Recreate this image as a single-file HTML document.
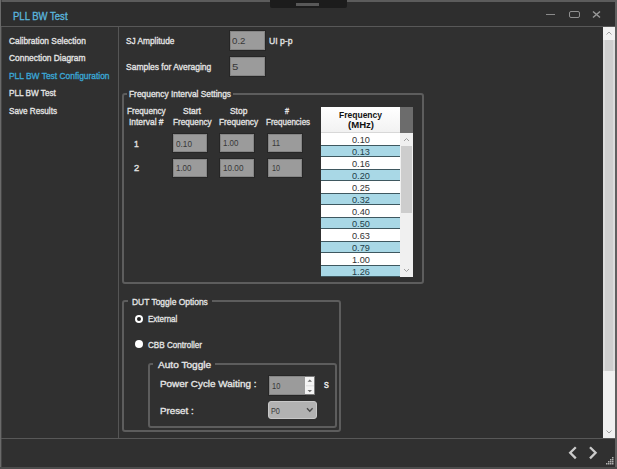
<!DOCTYPE html>
<html><head><meta charset="utf-8">
<style>
*{margin:0;padding:0;box-sizing:border-box}
html,body{width:617px;height:469px;overflow:hidden;background:#303030}
body{position:relative;font-family:"Liberation Sans",sans-serif}
.a{position:absolute}
.tx{position:absolute;white-space:nowrap;transform-origin:0 0}
.inp{position:absolute;background:#9b9b9b;border:1px solid #858585;box-shadow:0 0 0 1px #262626}
.gb{position:absolute;border:2px solid #5d5d5d;border-radius:3px}
.gap{position:absolute;background:#303030;height:3px}
.row{position:absolute;left:321px;width:79px;height:12px;background:#ffffff}
.row.b{background:#a9d8e6;border-top:1px solid #3f5860;border-bottom:1px solid #3f5860}
</style></head><body>
<!-- window borders -->
<div class="a" style="left:0;top:0;width:617px;height:2px;background:#5c5c5c"></div>
<div class="a" style="left:0;top:0;width:1px;height:469px;background:#6a6a6a"></div><div class="a" style="left:1px;top:0;width:1px;height:469px;background:#454545"></div>
<div class="a" style="left:615px;top:0;width:2px;height:469px;background:#606060"></div>
<div class="a" style="left:0;top:467px;width:617px;height:2px;background:#4c4c4c"></div>
<!-- title bar -->
<div class="a" style="left:1px;top:2px;width:614px;height:24px;background:#2e2e2e"></div>
<div class="a" style="left:270px;top:0;width:77px;height:8px;background:#1c1c1c;border-radius:0 0 2px 2px"></div>
<div class="a" style="left:296px;top:3px;width:23px;height:3px;background:#585858"></div>
<!-- window controls -->
<div class="a" style="left:546px;top:14px;width:9px;height:1px;background:#8a8a8a"></div>
<div class="a" style="left:568.5px;top:10.5px;width:11px;height:7px;border:1.7px solid #909090;border-radius:2px"></div>
<svg class="a" style="left:591px;top:10px" width="11" height="9" viewBox="0 0 11 9"><path d="M2 1.5 L9 7.5 M9 1.5 L2 7.5" stroke="#989898" stroke-width="1.5"/></svg>
<!-- separators -->
<div class="a" style="left:1px;top:26px;width:614px;height:1px;background:#585858"></div>
<div class="a" style="left:118px;top:27px;width:1px;height:411px;background:#555555"></div>
<div class="a" style="left:1px;top:438px;width:614px;height:1px;background:#585858"></div>
<!-- main scrollbar -->
<div class="a" style="left:603px;top:27px;width:12px;height:411px;background:#f0f0f0"></div>
<div class="a" style="left:603px;top:40px;width:12px;height:331px;background:#dcdcdc"></div><div class="a" style="left:605px;top:40px;width:8px;height:331px;background:#cfcfcf"></div>
<svg class="a" style="left:603px;top:27px" width="12" height="12"><path d="M3.5 7.5 L6 5 L8.5 7.5" stroke="#a0a0a0" stroke-width="1" fill="none"/></svg>
<svg class="a" style="left:603px;top:426px" width="12" height="12"><path d="M3.5 4.5 L6 7 L8.5 4.5" stroke="#a0a0a0" stroke-width="1" fill="none"/></svg>
<!-- bottom chevrons -->
<svg class="a" style="left:566px;top:444px" width="34" height="17"><path d="M9.8 3.2 L4.2 8.8 L9.8 14.4 M24 3.2 L29.6 8.8 L24 14.4" stroke="#cccccc" stroke-width="2.3" fill="none"/></svg>
<svg class="a" style="left:605px;top:456px" width="10" height="10"><g fill="#b0b0b0"><rect x="7" y="1" width="1.5" height="1.5"/><rect x="5" y="3" width="1.5" height="1.5"/><rect x="7" y="3" width="1.5" height="1.5"/><rect x="3" y="5" width="1.5" height="1.5"/><rect x="5" y="5" width="1.5" height="1.5"/><rect x="7" y="5" width="1.5" height="1.5"/><rect x="1" y="7" width="1.5" height="1.5"/><rect x="3" y="7" width="1.5" height="1.5"/><rect x="5" y="7" width="1.5" height="1.5"/><rect x="7" y="7" width="1.5" height="1.5"/></g></svg>

<!-- inputs top -->
<div class="inp" style="left:230px;top:31px;width:35px;height:19px"></div>
<div class="inp" style="left:230px;top:57px;width:35px;height:19px"></div>

<!-- Frequency interval group -->
<div class="gb" style="left:122px;top:93px;width:302px;height:191px"></div>
<div class="gap" style="left:127px;top:92px;width:106px"></div>
<div class="inp" style="left:173px;top:134px;width:34px;height:18px"></div>
<div class="inp" style="left:220px;top:134px;width:34px;height:18px"></div>
<div class="inp" style="left:268px;top:134px;width:34px;height:18px"></div>
<div class="inp" style="left:173px;top:159px;width:34px;height:18px"></div>
<div class="inp" style="left:220px;top:159px;width:34px;height:18px"></div>
<div class="inp" style="left:268px;top:159px;width:34px;height:18px"></div>

<!-- list -->
<div class="a" style="left:321px;top:107px;width:79px;height:26px;background:linear-gradient(#ffffff,#f2f2f2);border-bottom:1px solid #d8d8d8"></div>
<div class="a" style="left:400px;top:107px;width:13px;height:26px;background:#6c6c6c"></div>
<div class="row" style="top:133px"></div>
<div class="row b" style="top:145px"></div>
<div class="row" style="top:157px"></div>
<div class="row b" style="top:169px"></div>
<div class="row" style="top:181px"></div>
<div class="row b" style="top:193px"></div>
<div class="row" style="top:205px"></div>
<div class="row b" style="top:217px"></div>
<div class="row" style="top:229px"></div>
<div class="row b" style="top:241px"></div>
<div class="row" style="top:253px"></div>
<div class="row b" style="top:265px"></div>
<div class="a" style="left:400px;top:133px;width:13px;height:144px;background:#f0f0f0"></div>
<div class="a" style="left:401px;top:146px;width:11px;height:67px;background:#cdcdcd"></div>
<svg class="a" style="left:400px;top:133px" width="13" height="13"><path d="M4 8 L6.5 5.5 L9 8" stroke="#a0a0a0" stroke-width="1" fill="none"/></svg>
<svg class="a" style="left:400px;top:264px" width="13" height="13"><path d="M4 5 L6.5 7.5 L9 5" stroke="#a0a0a0" stroke-width="1" fill="none"/></svg>

<!-- DUT group -->
<div class="gb" style="left:122px;top:300px;width:219px;height:132px"></div>
<div class="gap" style="left:128px;top:299px;width:84px"></div>
<div class="a" style="left:135px;top:315px;width:8px;height:8px;border-radius:50%;background:#ffffff"></div>
<div class="a" style="left:137px;top:317px;width:4px;height:4px;border-radius:50%;background:#222222"></div>
<div class="a" style="left:135px;top:340px;width:8px;height:8px;border-radius:50%;background:#ffffff"></div>

<!-- Auto toggle group -->
<div class="gb" style="left:148px;top:363px;width:189px;height:65px"></div>
<div class="gap" style="left:153px;top:362px;width:62px"></div>
<div class="inp" style="left:269px;top:376px;width:36px;height:19px;border-right:none"></div>
<div class="a" style="left:305px;top:376px;width:10px;height:19px;background:#f4f4f4;border:1px solid #7c7c7c;border-left:none"></div>
<svg class="a" style="left:305px;top:376px" width="10" height="19"><path d="M2.5 5.8 L4.8 3.6 L7 5.8 Z M2.5 14 L4.8 16.2 L7 14 Z" fill="#707070"/><path d="M1 9.8 H9" stroke="#dddddd" stroke-width="1"/></svg>
<div class="a" style="left:268px;top:401px;width:49px;height:18px;background:#b2b2b2;border:1px solid #c8c8c8;border-radius:3px"></div>
<svg class="a" style="left:305px;top:406px" width="10" height="8"><path d="M2 2.3 L4.8 5.2 L7.6 2.3" stroke="#4a4a4a" stroke-width="1.4" fill="none"/></svg>

<div class="tx" id="t0" style="left:12.80px;top:10.60px;font-size:10.6px;line-height:10.6px;font-weight:normal;font-family:'Liberation Sans', sans-serif;color:#5ab5dd;transform:scaleX(0.8991);-webkit-text-stroke:0.35px">PLL BW Test</div>
<div class="tx" id="t1" style="left:9.30px;top:35.60px;font-size:9.8px;line-height:9.8px;font-weight:normal;font-family:'Liberation Sans', sans-serif;color:#e4e4e4;transform:scaleX(0.8545);-webkit-text-stroke:0.35px">Calibration Selection</div>
<div class="tx" id="t2" style="left:9.30px;top:52.60px;font-size:9.8px;line-height:9.8px;font-weight:normal;font-family:'Liberation Sans', sans-serif;color:#e4e4e4;transform:scaleX(0.8570);-webkit-text-stroke:0.35px">Connection Diagram</div>
<div class="tx" id="t3" style="left:9.30px;top:71.00px;font-size:9.8px;line-height:9.8px;font-weight:normal;font-family:'Liberation Sans', sans-serif;color:#3aa7d6;transform:scaleX(0.8586);-webkit-text-stroke:0.35px">PLL BW Test Configuration</div>
<div class="tx" id="t4" style="left:9.30px;top:88.10px;font-size:9.8px;line-height:9.8px;font-weight:normal;font-family:'Liberation Sans', sans-serif;color:#e4e4e4;transform:scaleX(0.8348);-webkit-text-stroke:0.35px">PLL BW Test</div>
<div class="tx" id="t5" style="left:9.30px;top:105.60px;font-size:9.8px;line-height:9.8px;font-weight:normal;font-family:'Liberation Sans', sans-serif;color:#e4e4e4;transform:scaleX(0.8319);-webkit-text-stroke:0.35px">Save Results</div>
<div class="tx" id="t6" style="left:125.70px;top:35.80px;font-size:9.8px;line-height:9.8px;font-weight:normal;font-family:'Liberation Sans', sans-serif;color:#e4e4e4;transform:scaleX(0.8478);-webkit-text-stroke:0.35px">SJ Amplitude</div>
<div class="tx" id="t7" style="left:125.70px;top:61.70px;font-size:9.8px;line-height:9.8px;font-weight:normal;font-family:'Liberation Sans', sans-serif;color:#e4e4e4;transform:scaleX(0.8662);-webkit-text-stroke:0.35px">Samples for Averaging</div>
<div class="tx" id="t8" style="left:269.10px;top:35.80px;font-size:9.8px;line-height:9.8px;font-weight:normal;font-family:'Liberation Sans', sans-serif;color:#e4e4e4;transform:scaleX(0.8777);-webkit-text-stroke:0.35px">UI p-p</div>
<div class="tx" id="t9" style="left:231.50px;top:35.80px;font-size:9.8px;line-height:9.8px;font-weight:normal;font-family:'Liberation Sans', sans-serif;color:#383838;transform:scaleX(0.9871);-webkit-text-stroke:0.0px">0.2</div>
<div class="tx" id="t10" style="left:231.50px;top:61.70px;font-size:9.8px;line-height:9.8px;font-weight:normal;font-family:'Liberation Sans', sans-serif;color:#383838;transform:scaleX(1.1667);-webkit-text-stroke:0.0px">5</div>
<div class="tx" id="t11" style="left:128.70px;top:89.10px;font-size:9.8px;line-height:9.8px;font-weight:normal;font-family:'Liberation Sans', sans-serif;color:#e4e4e4;transform:scaleX(0.8554);-webkit-text-stroke:0.35px">Frequency Interval Settings</div>
<div class="tx" id="t12" style="left:126.80px;top:105.90px;font-size:9.8px;line-height:9.8px;font-weight:normal;font-family:'Liberation Sans', sans-serif;color:#e4e4e4;transform:scaleX(0.8364);-webkit-text-stroke:0.35px">Frequency</div>
<div class="tx" id="t13" style="left:128.70px;top:117.00px;font-size:9.8px;line-height:9.8px;font-weight:normal;font-family:'Liberation Sans', sans-serif;color:#e4e4e4;transform:scaleX(0.8568);-webkit-text-stroke:0.35px">Interval #</div>
<div class="tx" id="t14" style="left:183.10px;top:105.90px;font-size:9.8px;line-height:9.8px;font-weight:normal;font-family:'Liberation Sans', sans-serif;color:#e4e4e4;transform:scaleX(0.8632);-webkit-text-stroke:0.35px">Start</div>
<div class="tx" id="t15" style="left:173.00px;top:117.00px;font-size:9.8px;line-height:9.8px;font-weight:normal;font-family:'Liberation Sans', sans-serif;color:#e4e4e4;transform:scaleX(0.8343);-webkit-text-stroke:0.35px">Frequency</div>
<div class="tx" id="t16" style="left:229.60px;top:105.90px;font-size:9.8px;line-height:9.8px;font-weight:normal;font-family:'Liberation Sans', sans-serif;color:#e4e4e4;transform:scaleX(0.8597);-webkit-text-stroke:0.35px">Stop</div>
<div class="tx" id="t17" style="left:218.90px;top:117.00px;font-size:9.8px;line-height:9.8px;font-weight:normal;font-family:'Liberation Sans', sans-serif;color:#e4e4e4;transform:scaleX(0.8450);-webkit-text-stroke:0.35px">Frequency</div>
<div class="tx" id="t18" style="left:284.90px;top:105.90px;font-size:9.8px;line-height:9.8px;font-weight:normal;font-family:'Liberation Sans', sans-serif;color:#e4e4e4;transform:scaleX(0.7333);-webkit-text-stroke:0.35px">#</div>
<div class="tx" id="t19" style="left:265.60px;top:117.00px;font-size:9.8px;line-height:9.8px;font-weight:normal;font-family:'Liberation Sans', sans-serif;color:#e4e4e4;transform:scaleX(0.8183);-webkit-text-stroke:0.35px">Frequencies</div>
<div class="tx" id="t20" style="left:134.00px;top:138.50px;font-size:9.8px;line-height:9.8px;font-weight:normal;font-family:'Liberation Sans', sans-serif;color:#e4e4e4;transform:scaleX(0.8800);-webkit-text-stroke:0.35px">1</div>
<div class="tx" id="t21" style="left:133.80px;top:163.20px;font-size:9.8px;line-height:9.8px;font-weight:normal;font-family:'Liberation Sans', sans-serif;color:#e4e4e4;transform:scaleX(0.9600);-webkit-text-stroke:0.35px">2</div>
<div class="tx" id="t22" style="left:175.60px;top:138.60px;font-size:9.8px;line-height:9.8px;font-weight:normal;font-family:'Liberation Sans', sans-serif;color:#383838;transform:scaleX(0.8359);-webkit-text-stroke:0.0px">0.10</div>
<div class="tx" id="t23" style="left:223.00px;top:138.40px;font-size:9.8px;line-height:9.8px;font-weight:normal;font-family:'Liberation Sans', sans-serif;color:#383838;transform:scaleX(0.8104);-webkit-text-stroke:0.0px">1.00</div>
<div class="tx" id="t24" style="left:272.00px;top:138.40px;font-size:9.8px;line-height:9.8px;font-weight:normal;font-family:'Liberation Sans', sans-serif;color:#383838;transform:scaleX(0.7921);-webkit-text-stroke:0.0px">11</div>
<div class="tx" id="t25" style="left:175.60px;top:163.40px;font-size:9.8px;line-height:9.8px;font-weight:normal;font-family:'Liberation Sans', sans-serif;color:#383838;transform:scaleX(0.8104);-webkit-text-stroke:0.0px">1.00</div>
<div class="tx" id="t26" style="left:223.00px;top:163.30px;font-size:9.8px;line-height:9.8px;font-weight:normal;font-family:'Liberation Sans', sans-serif;color:#383838;transform:scaleX(0.8337);-webkit-text-stroke:0.0px">10.00</div>
<div class="tx" id="t27" style="left:272.00px;top:163.30px;font-size:9.8px;line-height:9.8px;font-weight:normal;font-family:'Liberation Sans', sans-serif;color:#383838;transform:scaleX(0.7337);-webkit-text-stroke:0.0px">10</div>
<div class="tx" id="t28" style="left:339.10px;top:110.30px;font-size:9.6px;line-height:9.6px;font-weight:bold;font-family:'Liberation Sans', sans-serif;color:#111111;transform:scaleX(0.8865);-webkit-text-stroke:0.0px">Frequency</div>
<div class="tx" id="t29" style="left:348.00px;top:120.00px;font-size:9.6px;line-height:9.6px;font-weight:bold;font-family:'Liberation Sans', sans-serif;color:#111111;transform:scaleX(0.9957);-webkit-text-stroke:0.0px">(MHz)</div>
<div class="tx" id="t30" style="left:351.60px;top:134.70px;font-size:9.4px;line-height:9.4px;font-weight:normal;font-family:'Liberation Sans', sans-serif;color:#333333;transform:scaleX(0.9816);-webkit-text-stroke:0.0px">0.10</div>
<div class="tx" id="t31" style="left:351.60px;top:146.70px;font-size:9.4px;line-height:9.4px;font-weight:normal;font-family:'Liberation Sans', sans-serif;color:#1f3f4a;transform:scaleX(0.9816);-webkit-text-stroke:0.0px">0.13</div>
<div class="tx" id="t32" style="left:351.60px;top:158.70px;font-size:9.4px;line-height:9.4px;font-weight:normal;font-family:'Liberation Sans', sans-serif;color:#333333;transform:scaleX(0.9816);-webkit-text-stroke:0.0px">0.16</div>
<div class="tx" id="t33" style="left:351.60px;top:170.70px;font-size:9.4px;line-height:9.4px;font-weight:normal;font-family:'Liberation Sans', sans-serif;color:#1f3f4a;transform:scaleX(0.9816);-webkit-text-stroke:0.0px">0.20</div>
<div class="tx" id="t34" style="left:351.60px;top:182.70px;font-size:9.4px;line-height:9.4px;font-weight:normal;font-family:'Liberation Sans', sans-serif;color:#333333;transform:scaleX(0.9816);-webkit-text-stroke:0.0px">0.25</div>
<div class="tx" id="t35" style="left:351.60px;top:194.70px;font-size:9.4px;line-height:9.4px;font-weight:normal;font-family:'Liberation Sans', sans-serif;color:#1f3f4a;transform:scaleX(0.9816);-webkit-text-stroke:0.0px">0.32</div>
<div class="tx" id="t36" style="left:351.60px;top:206.70px;font-size:9.4px;line-height:9.4px;font-weight:normal;font-family:'Liberation Sans', sans-serif;color:#333333;transform:scaleX(0.9816);-webkit-text-stroke:0.0px">0.40</div>
<div class="tx" id="t37" style="left:351.60px;top:218.70px;font-size:9.4px;line-height:9.4px;font-weight:normal;font-family:'Liberation Sans', sans-serif;color:#1f3f4a;transform:scaleX(0.9816);-webkit-text-stroke:0.0px">0.50</div>
<div class="tx" id="t38" style="left:351.60px;top:230.70px;font-size:9.4px;line-height:9.4px;font-weight:normal;font-family:'Liberation Sans', sans-serif;color:#333333;transform:scaleX(0.9816);-webkit-text-stroke:0.0px">0.63</div>
<div class="tx" id="t39" style="left:351.60px;top:242.70px;font-size:9.4px;line-height:9.4px;font-weight:normal;font-family:'Liberation Sans', sans-serif;color:#1f3f4a;transform:scaleX(0.9816);-webkit-text-stroke:0.0px">0.79</div>
<div class="tx" id="t40" style="left:351.60px;top:254.70px;font-size:9.4px;line-height:9.4px;font-weight:normal;font-family:'Liberation Sans', sans-serif;color:#333333;transform:scaleX(0.9816);-webkit-text-stroke:0.0px">1.00</div>
<div class="tx" id="t41" style="left:351.60px;top:266.70px;font-size:9.4px;line-height:9.4px;font-weight:normal;font-family:'Liberation Sans', sans-serif;color:#1f3f4a;transform:scaleX(0.9816);-webkit-text-stroke:0.0px">1.26</div>
<div class="tx" id="t42" style="left:131.80px;top:297.40px;font-size:9.8px;line-height:9.8px;font-weight:normal;font-family:'Liberation Sans', sans-serif;color:#e4e4e4;transform:scaleX(0.8629);-webkit-text-stroke:0.35px">DUT Toggle Options</div>
<div class="tx" id="t43" style="left:148.00px;top:314.40px;font-size:9.8px;line-height:9.8px;font-weight:normal;font-family:'Liberation Sans', sans-serif;color:#e4e4e4;transform:scaleX(0.8165);-webkit-text-stroke:0.35px">External</div>
<div class="tx" id="t44" style="left:148.00px;top:339.50px;font-size:9.8px;line-height:9.8px;font-weight:normal;font-family:'Liberation Sans', sans-serif;color:#e4e4e4;transform:scaleX(0.8264);-webkit-text-stroke:0.35px">CBB Controller</div>
<div class="tx" id="t45" style="left:157.70px;top:359.60px;font-size:9.7px;line-height:9.7px;font-weight:normal;font-family:'Liberation Sans', sans-serif;color:#e4e4e4;transform:scaleX(1.0438);-webkit-text-stroke:0.35px">Auto Toggle</div>
<div class="tx" id="t46" style="left:160.00px;top:379.30px;font-size:9.8px;line-height:9.8px;font-weight:normal;font-family:'Liberation Sans', sans-serif;color:#e4e4e4;transform:scaleX(1.0102);-webkit-text-stroke:0.35px">Power Cycle Waiting :</div>
<div class="tx" id="t47" style="left:160.00px;top:405.90px;font-size:9.8px;line-height:9.8px;font-weight:normal;font-family:'Liberation Sans', sans-serif;color:#e4e4e4;transform:scaleX(0.9959);-webkit-text-stroke:0.35px">Preset :</div>
<div class="tx" id="t48" style="left:271.70px;top:380.90px;font-size:9.8px;line-height:9.8px;font-weight:normal;font-family:'Liberation Sans', sans-serif;color:#383838;transform:scaleX(0.7599);-webkit-text-stroke:0.0px">10</div>
<div class="tx" id="t49" style="left:324.00px;top:379.10px;font-size:11px;line-height:11px;font-weight:normal;font-family:'Liberation Sans', sans-serif;color:#eeeeee;transform:scaleX(0.8833);-webkit-text-stroke:0.35px">s</div>
<div class="tx" id="t50" style="left:270.70px;top:406.30px;font-size:9.8px;line-height:9.8px;font-weight:normal;font-family:'Liberation Sans', sans-serif;color:#383838;transform:scaleX(0.7420);-webkit-text-stroke:0.0px">P0</div>
</body></html>
